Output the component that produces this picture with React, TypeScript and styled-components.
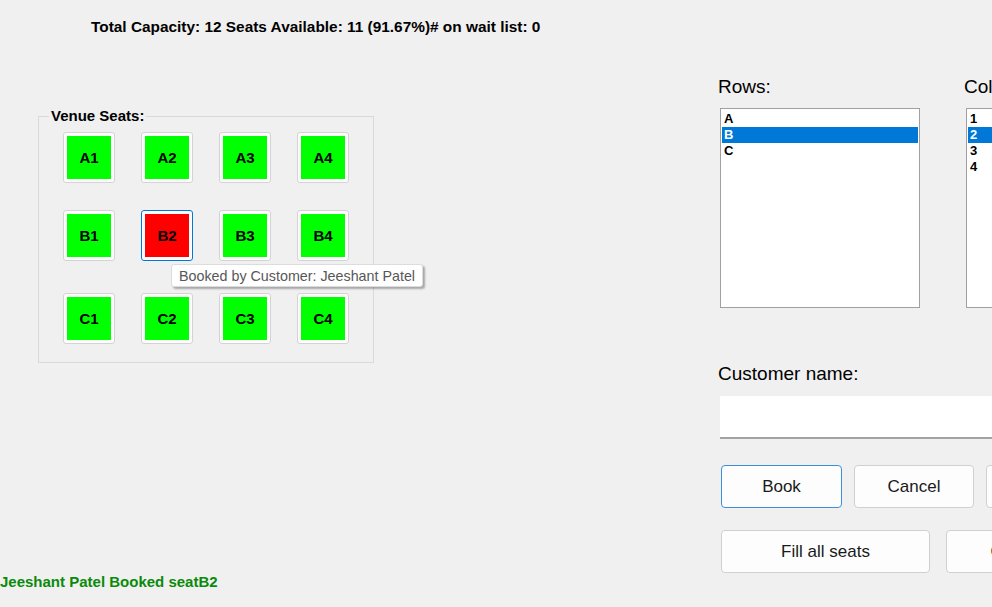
import styled, { createGlobalStyle } from "styled-components";

const GlobalStyle = createGlobalStyle`
    html, body {
        margin: 0;
        padding: 0;
        background: #f0f0f0;
    }
    * {
        box-sizing: border-box;
    }
`;

const Page = styled.div`
    width: 992px;
    height: 607px;
    overflow: hidden;
    display: flex;
    flex-direction: column;
    background: #f0f0f0;
    font-family: "Liberation Sans", Arial, sans-serif;
    color: #000;
`;

const Summary = styled.div`
    padding: 18px 0 0 91px;
    font-size: 15.4px;
    line-height: 18px;
    font-weight: bold;
    white-space: nowrap;
`;

const Main = styled.div`
    display: flex;
    align-items: flex-start;
    margin-top: 40px;
`;

const SeatsBox = styled.fieldset`
    flex-shrink: 0;
    width: 336px;
    margin: 31px 0 0 38px;
    padding: 0 0 18px 0;
    border: 1px solid #d9d9d9;
    border-radius: 0;
`;

const Legend = styled.legend`
    margin-left: 10px;
    padding: 0 2px;
    font-size: 15px;
    line-height: 18px;
    font-weight: bold;
`;

const SeatGrid = styled.div`
    display: grid;
    grid-template-columns: repeat(4, 52px);
    grid-template-rows: 78px 83px 51px;
    column-gap: 26px;
    align-items: start;
    margin: 7px 0 0 24px;
`;

const SeatSlot = styled.div`
    position: relative;
`;

const Seat = styled.button<{ $booked?: boolean; $focused?: boolean }>`
    display: block;
    width: 52px;
    height: 51px;
    padding: 3px;
    border: 1px solid ${p => (p.$focused ? "#0078d7" : "#d3d3d3")};
    border-radius: 3px;
    background: #fdfdfd;
    font-family: "Liberation Sans", Arial, sans-serif;
    font-size: 15px;
    font-weight: bold;
    color: #000;
    cursor: pointer;

    span {
        display: flex;
        align-items: center;
        justify-content: center;
        width: 100%;
        height: 100%;
        background: ${p => (p.$booked ? "#ff0000" : "#00ff00")};
    }
`;

const Tooltip = styled.div`
    position: absolute;
    left: 30px;
    top: 54px;
    z-index: 2;
    height: 23px;
    padding: 0 7px;
    display: flex;
    align-items: center;
    white-space: nowrap;
    background: #ffffff;
    border: 1px solid #dcdcdc;
    border-radius: 3px;
    box-shadow: 2px 2px 2px rgba(0, 0, 0, 0.3);
    color: #575757;
    font-size: 14.3px;
    font-weight: normal;
`;

const Form = styled.div`
    flex-shrink: 0;
    margin-left: 344px;
    display: flex;
    flex-direction: column;
`;

const Pickers = styled.div`
    display: flex;
    gap: 44px;
`;

const Picker = styled.div`
    display: flex;
    flex-direction: column;
    width: 202px;
`;

const Label = styled.div`
    font-size: 19px;
    line-height: 22px;
    white-space: nowrap;
`;

const ListBox = styled.ul`
    list-style: none;
    margin: 10px 0 0 2px;
    padding: 2px 1px;
    width: 200px;
    height: 200px;
    background: #fff;
    border: 1px solid #a0a0a0;
`;

const ListItem = styled.li<{ $selected?: boolean }>`
    padding-left: 2px;
    font-size: 13px;
    line-height: 16px;
    font-weight: bold;
    background: ${p => (p.$selected ? "#0078d7" : "transparent")};
    color: ${p => (p.$selected ? "#fff" : "#000")};
`;

const NameLabel = styled(Label)`
    margin-top: 55px;
`;

const NameInput = styled.input`
    width: 320px;
    height: 43px;
    margin: 11px 0 0 2px;
    border: none;
    border-bottom: 2px solid #a3a3a3;
    background: #fff;
    outline: none;
`;

const ButtonRow = styled.div<{ $gap: number; $top: number }>`
    display: flex;
    gap: ${p => p.$gap}px;
    margin: ${p => p.$top}px 0 0 3px;
`;

const Button = styled.button<{ $width: number; $primary?: boolean }>`
    flex-shrink: 0;
    width: ${p => p.$width}px;
    height: 43px;
    border: 1px solid ${p => (p.$primary ? "#3d8fdb" : "#d0d0d0")};
    border-radius: 4px;
    background: #fdfdfd;
    font-family: "Liberation Sans", Arial, sans-serif;
    font-size: 17px;
    color: #1a1a1a;
    white-space: nowrap;
    cursor: pointer;
`;

const Status = styled.div`
    margin-top: auto;
    padding-bottom: 17px;
    font-size: 15px;
    line-height: 18px;
    font-weight: bold;
    color: #0a8a0a;
    white-space: nowrap;
`;

const rows = ["A", "B", "C"];
const cols = ["1", "2", "3", "4"];
const booked = "B2";

const App = () => {
    return (
        <Page>
            <GlobalStyle />
            <Summary>Total Capacity: 12 Seats Available: 11 (91.67%)# on wait list: 0</Summary>
            <Main>
                <SeatsBox>
                    <Legend>Venue Seats:</Legend>
                    <SeatGrid>
                        {rows.map(r =>
                            cols.map(c => {
                                const id = r + c;
                                const isBooked = id === booked;
                                return (
                                    <SeatSlot key={id}>
                                        <Seat $booked={isBooked} $focused={isBooked}>
                                            <span>{id}</span>
                                        </Seat>
                                        {isBooked && <Tooltip>Booked by Customer: Jeeshant Patel</Tooltip>}
                                    </SeatSlot>
                                );
                            })
                        )}
                    </SeatGrid>
                </SeatsBox>
                <Form>
                    <Pickers>
                        <Picker>
                            <Label>Rows:</Label>
                            <ListBox>
                                {rows.map(r => (
                                    <ListItem key={r} $selected={r === "B"}>{r}</ListItem>
                                ))}
                            </ListBox>
                        </Picker>
                        <Picker>
                            <Label>Columns:</Label>
                            <ListBox>
                                {cols.map(c => (
                                    <ListItem key={c} $selected={c === "2"}>{c}</ListItem>
                                ))}
                            </ListBox>
                        </Picker>
                    </Pickers>
                    <NameLabel>Customer name:</NameLabel>
                    <NameInput />
                    <ButtonRow $gap={12} $top={26}>
                        <Button $width={121} $primary>Book</Button>
                        <Button $width={120}>Cancel</Button>
                        <Button $width={120}>Add to wait list</Button>
                    </ButtonRow>
                    <ButtonRow $gap={16} $top={22}>
                        <Button $width={209}>Fill all seats</Button>
                        <Button $width={209}>Cancel all seats</Button>
                    </ButtonRow>
                </Form>
            </Main>
            <Status>Jeeshant Patel Booked seatB2</Status>
        </Page>
    );
};

export default App;
